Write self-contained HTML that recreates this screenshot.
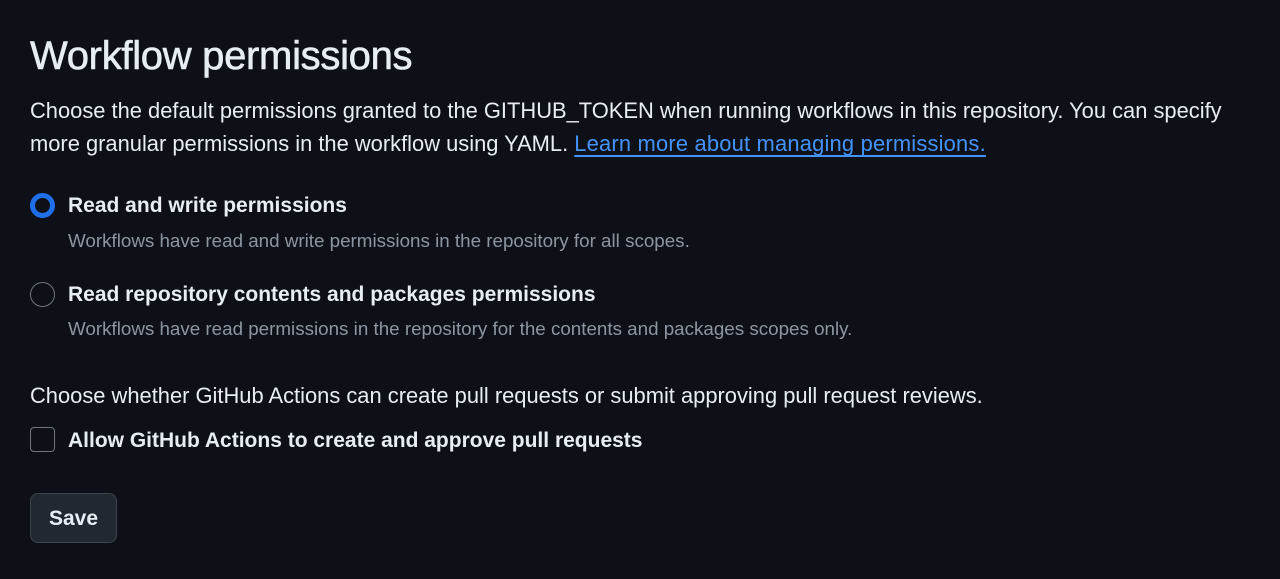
<!DOCTYPE html>
<html><head><style>
body{margin:0;background:#0d1117;width:1280px;height:579px;overflow:hidden;font-family:"Liberation Sans",sans-serif;color:#e6edf3;position:relative}
.a{position:absolute;white-space:nowrap}
h1{position:absolute;left:30px;top:34px;margin:0;font-size:40px;font-weight:400;letter-spacing:-0.3px;-webkit-text-stroke:0.6px #e6edf3}
.p{font-size:21.9px;color:#e6edf3}
.b{font-size:21px;font-weight:700}
.s{font-size:18.8px;color:#8d96a0}
a{color:#4493f8;text-decoration:underline;text-underline-offset:4px;text-decoration-skip-ink:none;letter-spacing:0.2px}
</style></head><body>
<h1>Workflow permissions</h1>
<div class="a p" style="left:30px;top:98px">Choose the default permissions granted to the GITHUB_TOKEN when running workflows in this repository. You can specify</div>
<div class="a p" style="left:30px;top:131px">more granular permissions in the workflow using YAML. <a>Learn more about managing permissions.</a></div>
<div class="a" style="left:30px;top:193px;width:15px;height:15px;border:5px solid #1f6feb;border-radius:50%;background:#0d1117"></div>
<div class="a b" style="left:68px;top:194px">Read and write permissions</div>
<div class="a s" style="left:68px;top:230px">Workflows have read and write permissions in the repository for all scopes.</div>
<div class="a" style="left:30px;top:282px;width:23px;height:23px;border:1.5px solid #6e7681;border-radius:50%"></div>
<div class="a b" style="left:68px;top:283px">Read repository contents and packages permissions</div>
<div class="a s" style="left:68px;top:318px">Workflows have read permissions in the repository for the contents and packages scopes only.</div>
<div class="a p" style="left:30px;top:383px">Choose whether GitHub Actions can create pull requests or submit approving pull request reviews.</div>
<div class="a" style="left:30px;top:427px;width:23px;height:23px;border:1.5px solid #6e7681;border-radius:4px"></div>
<div class="a b" style="left:68px;top:429px">Allow GitHub Actions to create and approve pull requests</div>
<div class="a" style="left:30px;top:493px;width:87px;height:50px;border:1px solid #3d444d;border-radius:8px;background:#212830;box-sizing:border-box;font-size:21px;font-weight:700;text-align:center;line-height:50px">Save</div>
</body></html>
